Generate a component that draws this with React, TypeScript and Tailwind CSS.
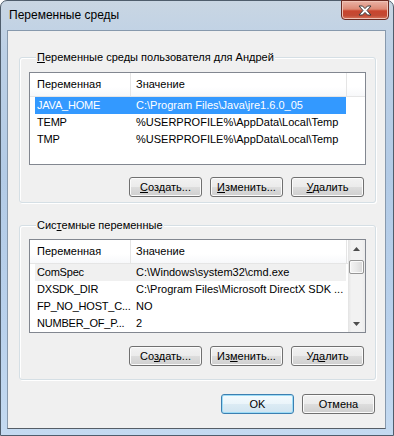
import type { ReactNode } from 'react';

const font = "font-['Liberation_Sans',Arial,sans-serif]";

function U({ children }: { children: ReactNode }) {
	return <span className="underline underline-offset-[1px] decoration-[1px]">{children}</span>;
}

function Button({ children, primary }: { children: ReactNode; primary?: boolean }) {
	return (
		<button
			type="button"
			className={
				primary
					? 'h-[20px] w-[73px] rounded-[3px] border border-[#3c7fb1] bg-[linear-gradient(#f4fbfe_0%,#eaf4fa_50%,#dcebf4_51%,#d0e4f0_100%)] text-[11px] leading-none text-black shadow-[inset_0_0_0_1px_#9ddcf6]'
					: 'h-[20px] w-[73px] rounded-[3px] border border-[#707070] bg-[linear-gradient(#f2f2f2_0%,#ebebeb_50%,#dddddd_51%,#cfcfcf_100%)] text-[11px] leading-none text-black shadow-[inset_0_0_0_1px_#fbfbfb]'
			}
		>
			{children}
		</button>
	);
}

interface Row {
	name: string;
	value: string;
	state?: 'selected' | 'inactive';
}

function ListHeader() {
	return (
		<div className="flex h-[24px] border-b border-[#e5e5e5] bg-[linear-gradient(#ffffff_0%,#ffffff_60%,#f7f8fa_100%)] text-[11px] text-black">
			<div className="flex w-[101px] items-center border-r border-[#e5e5e5] pl-[7px]">Переменная</div>
			<div className="flex w-[216px] items-center border-r border-[#e5e5e5] pl-[5px]">Значение</div>
			<div className="flex-1" />
		</div>
	);
}

function ListRows({ rows }: { rows: Row[] }) {
	return (
		<div className="flex flex-col">
			{rows.map(r => (
				<div
					key={r.name}
					className={`ml-[5px] flex h-[17px] w-[311px] items-center text-[11px] whitespace-nowrap ${
						r.state === 'selected' ? 'bg-[#3399ff] text-white' : r.state === 'inactive' ? 'bg-[#f0f0f0] text-black' : 'text-black'
					}`}
				>
					<div className="w-[95px] shrink-0 pl-[2px] tracking-[-0.2px]">{r.name}</div>
					<div className="flex-1 overflow-hidden pl-[6px]">{r.value}</div>
				</div>
			))}
		</div>
	);
}

function ScrollBar() {
	return (
		<div className="flex w-[17px] flex-col bg-[linear-gradient(90deg,#e3e3e3_0%,#f2f2f2_20%,#f2f2f2_80%,#ebebeb_100%)]">
			<div className="flex h-[17px] items-center justify-center">
				<svg width="7" height="4" viewBox="0 0 7 4">
					<path d="M3.5 0 L7 4 L0 4 Z" fill="#4d4d4d" />
				</svg>
			</div>
			<div className="mx-[1px] mt-[3px] h-[14px] rounded-[2px] border border-[#969696] bg-[linear-gradient(90deg,#f4f4f4_0%,#e8e8e8_50%,#d8d8d8_100%)] shadow-[inset_0_0_0_1px_#fafafa]" />
			<div className="flex-1" />
			<div className="flex h-[17px] items-center justify-center">
				<svg width="7" height="4" viewBox="0 0 7 4">
					<path d="M0 0 L7 0 L3.5 4 Z" fill="#4d4d4d" />
				</svg>
			</div>
		</div>
	);
}

function GroupBox({ legend, children, className }: { legend: ReactNode; children: ReactNode; className: string }) {
	return (
		<div className={`rounded-[3px] border border-[#d5dfe5] shadow-[inset_1px_1px_0_#ffffff,1px_1px_0_#ffffff] ${className}`}>
			<div className="-mt-[8px] ml-[7px] w-fit bg-[#f0f0f0] px-[1px] text-[11px] leading-[14px] text-black">{legend}</div>
			{children}
		</div>
	);
}

const userRows: Row[] = [
	{ name: 'JAVA_HOME', value: 'C:\\Program Files\\Java\\jre1.6.0_05', state: 'selected' },
	{ name: 'TEMP', value: '%USERPROFILE%\\AppData\\Local\\Temp' },
	{ name: 'TMP', value: '%USERPROFILE%\\AppData\\Local\\Temp' },
];

const sysRows: Row[] = [
	{ name: 'ComSpec', value: 'C:\\Windows\\system32\\cmd.exe', state: 'inactive' },
	{ name: 'DXSDK_DIR', value: 'C:\\Program Files\\Microsoft DirectX SDK ...' },
	{ name: 'FP_NO_HOST_C...', value: 'NO' },
	{ name: 'NUMBER_OF_P...', value: '2' },
];

export default function App() {
	return (
		<div className={`${font} h-[436px] w-[394px] bg-white`}>
			<div className="flex h-[436px] w-[394px] flex-col rounded-t-[7px] border border-[#4f5d6c] bg-[linear-gradient(180deg,#c9d6e3_0%,#bcd0e6_12%,#b3cbe6_40%,#b9d1ec_75%,#c4daf1_100%)]">
				{/* Title bar */}
				<div className="flex h-[29px] items-start justify-between">
					<div className="mt-[6px] pl-[8px] text-[12px] leading-[16px] text-black">Переменные среды</div>
					<div className="-mt-[1px] mr-[4px] flex h-[20px] w-[48px] items-center justify-center rounded-b-[4px] border border-[#6b2b22] bg-[linear-gradient(180deg,#eab3a6_0%,#dd8a76_45%,#c9452e_55%,#c24a34_80%,#d7765e_100%)] shadow-[inset_0_0_0_1px_#f0c2b5]">
						<svg width="14" height="11" viewBox="0 0 14 11">
							<path
								d="M1 1 L4.5 1 L7 3.6 L9.5 1 L13 1 L9 5.5 L13 10 L9.5 10 L7 7.4 L4.5 10 L1 10 L5 5.5 Z"
								fill="#ffffff"
								stroke="#3d3d3d"
								strokeWidth="1"
								strokeLinejoin="round"
							/>
						</svg>
					</div>
				</div>

				{/* Client area */}
				<div className="ml-[6px] flex h-[399px] w-[379px] flex-col border border-[#8799ad] border-b-[#555d66] bg-[#f0f0f0] pl-[11px] pr-[9px]">
					<GroupBox className="mt-[26px] px-[9px] pb-[5px]" legend={<><U>П</U>еременные среды пользователя для Андрей</>}>
						<div className="mt-[8px] flex h-[93px] flex-col border border-[#828790] bg-white">
							<ListHeader />
							<ListRows rows={userRows} />
						</div>
						<div className="mt-[12px] flex justify-end gap-[8px] pr-[2px]">
							<Button>
								<U>С</U>оздать...
							</Button>
							<Button>
								<U>И</U>зменить...
							</Button>
							<Button>
								<U>У</U>далить
							</Button>
						</div>
					</GroupBox>

					<GroupBox className="mt-[22px] px-[9px] pb-[13px]" legend={<>Сис<U>т</U>емные переменные</>}>
						<div className="mt-[7px] flex h-[94px] border border-[#828790] bg-white">
							<div className="flex flex-1 flex-col">
								<ListHeader />
								<ListRows rows={sysRows} />
							</div>
							<ScrollBar />
						</div>
						<div className="mt-[13px] flex justify-end gap-[8px] pr-[2px]">
							<Button>
								Со<U>з</U>дать...
							</Button>
							<Button>
								Из<U>м</U>енить...
							</Button>
							<Button>
								Уд<U>а</U>лить
							</Button>
						</div>
					</GroupBox>

					<div className="mt-[14px] flex justify-end gap-[8px] pr-[1px]">
						<Button primary>OK</Button>
						<Button>Отмена</Button>
					</div>
				</div>
			</div>
		</div>
	);
}
